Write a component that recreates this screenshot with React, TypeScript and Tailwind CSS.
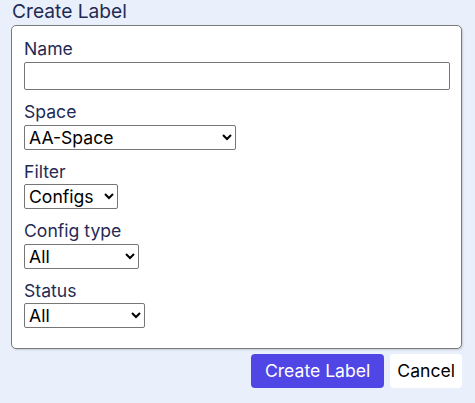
import { useState } from "react";

type Field = {
  label: string;
  width: string;
  options: string[];
};

const selects: Field[] = [
  { label: "Space", width: "w-[212px]", options: ["AA-Space"] },
  { label: "Filter", width: "w-[94px]", options: ["Configs"] },
  { label: "Config type", width: "w-[115px]", options: ["All"] },
  { label: "Status", width: "w-[121px]", options: ["All"] },
];

export default function App() {
  const [name, setName] = useState("");

  return (
    <div
      className="min-h-[403px] bg-[#eaf0fb] pl-[11px] pr-[13px] text-[#1f2b55]"
      style={{ fontFamily: "Inter, 'Noto Sans', sans-serif" }}
    >
      <h2 className="pl-[1px] text-[19.2px] leading-[22px]">Create Label</h2>

      <form
        className="mt-[3px] flex flex-col rounded-[5px] border border-[#7a7a7a] bg-white pl-[12px] pr-[11px] pt-[12px] pb-[20px] shadow-[1px_1px_2px_rgba(0,0,0,0.15)]"
        onSubmit={(e) => e.preventDefault()}
      >
        <label className="text-[17.6px] leading-[22px]">Name</label>
        <input
          value={name}
          onChange={(e) => setName(e.target.value)}
          className="mt-[2px] h-[28px] w-full rounded-[2px] border border-[#767676] px-[4px] text-[17.6px] text-black outline-none"
        />

        {selects.map((f) => (
          <div key={f.label} className="mt-[11px] flex flex-col">
            <label className="text-[17.6px] leading-[22px]">{f.label}</label>
            <select
              className={`${f.width} mt-[1.5px] h-[25px] rounded-[2px] border border-[#767676] text-[17.6px] leading-[22px] text-black`}
            >
              {f.options.map((o) => (
                <option key={o}>{o}</option>
              ))}
            </select>
          </div>
        ))}
      </form>

      <div className="mt-[5px] flex justify-end gap-[6px]">
        <button className="h-[34px] rounded-[4px] bg-[#5046e5] px-[14px] text-[17.6px] text-white">
          Create Label
        </button>
        <button className="h-[34px] rounded-[4px] bg-white px-[7px] text-[17.6px] text-black">
          Cancel
        </button>
      </div>
    </div>
  );
}
